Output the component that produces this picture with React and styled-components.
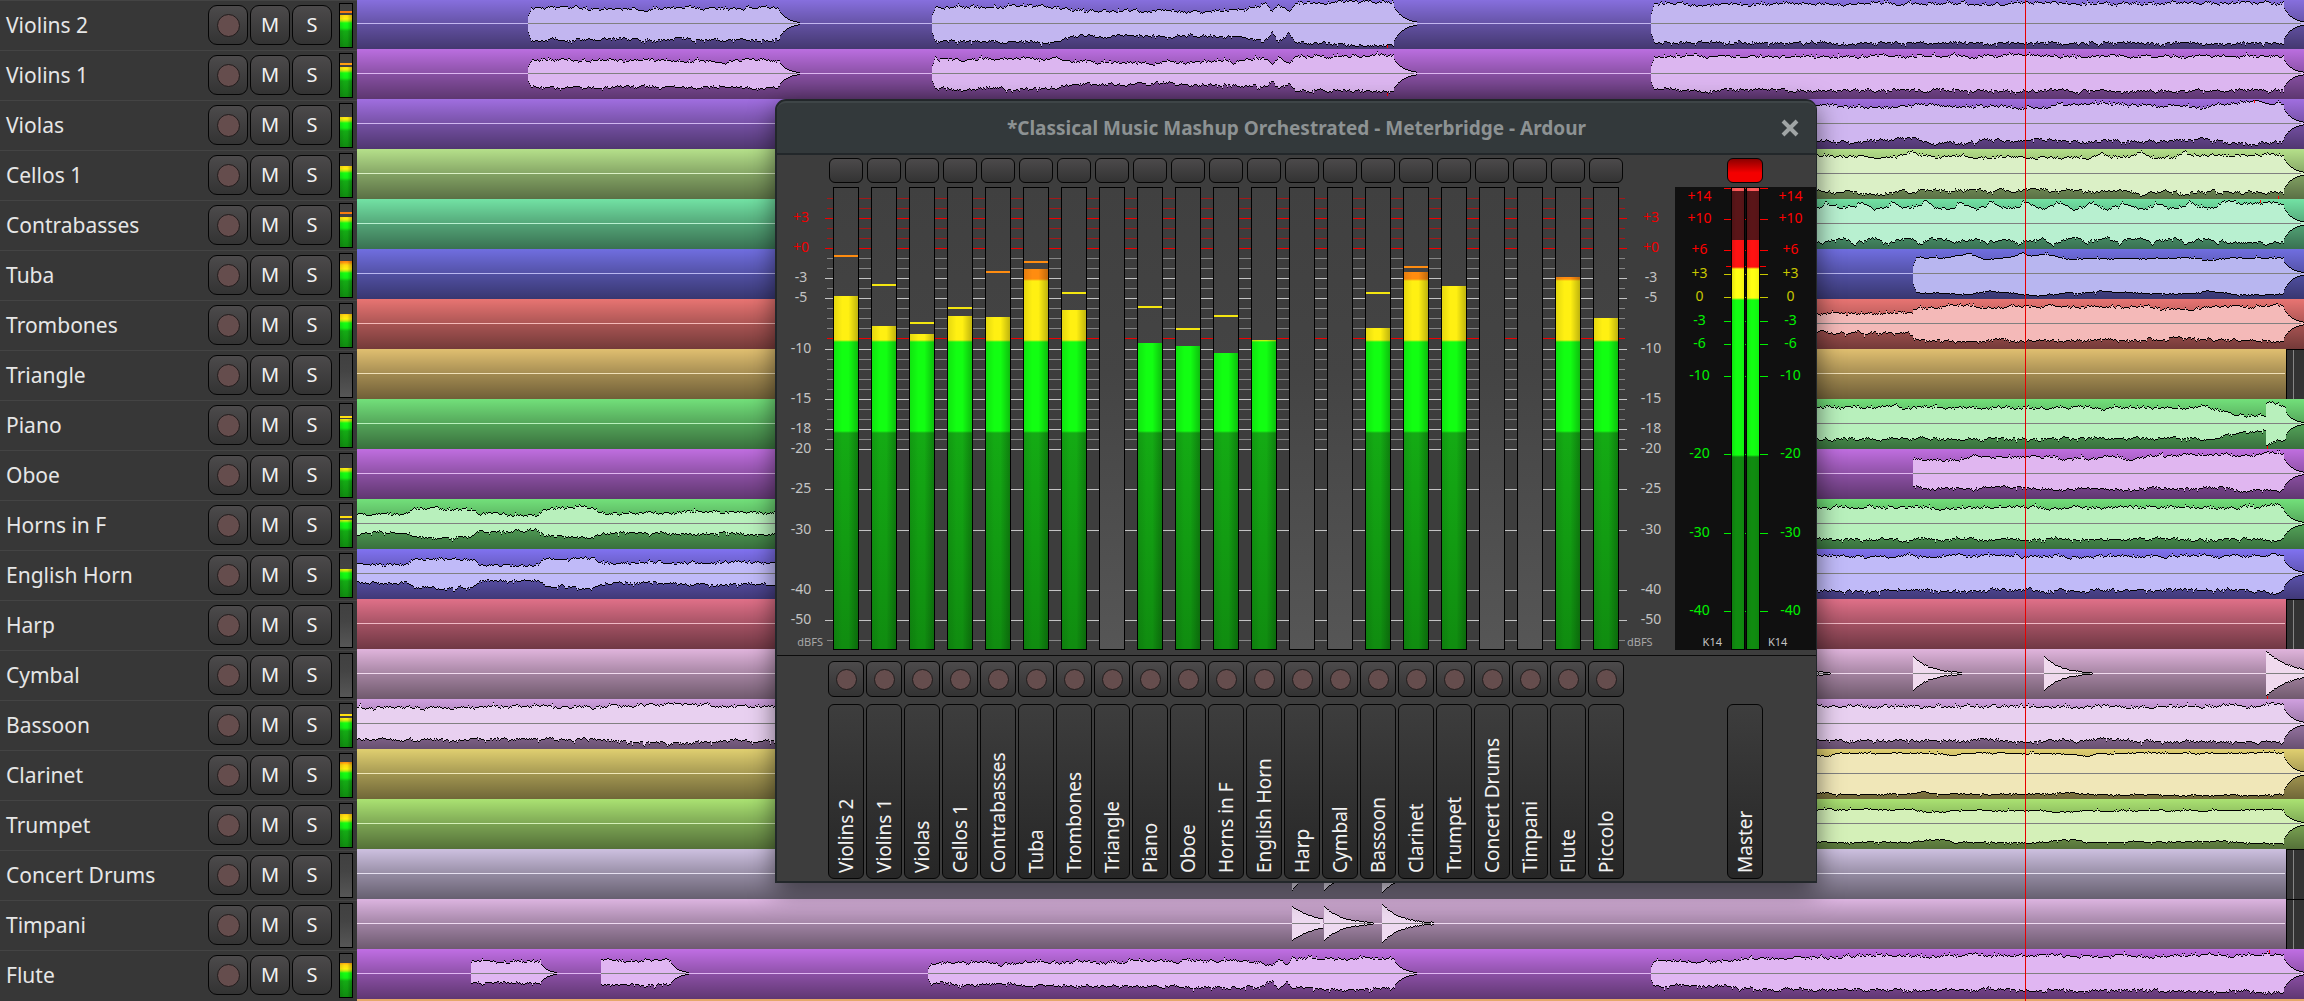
import React from "react";
import styled, { createGlobalStyle, css } from "styled-components";

const GlobalStyle = createGlobalStyle`
  *, *::before, *::after { box-sizing: border-box; }
  html, body { margin: 0; background: #373737; }
  body { font-family: "Noto Sans", "Open Sans", sans-serif; color: #e6e6e6; overflow: hidden; }
  button { font: inherit; color: inherit; padding: 0; margin: 0; }
`;

/* ---------- session data ---------- */

const HEADER_WIDTH = 357;
const LANE_HEIGHT = 50;
const CENTER = 24;

const body = (points, tail = 18, sharp = false) => ({ type: "body", points, tail, sharp });
const hit = (x, amp, length, decay = 3) => ({ type: "hit", x, amp, length, decay });

const stringsPhrases = (k) => [
  body([[528, 15 * k, 17 * k], [560, 16 * k, 17 * k], [620, 15 * k, 16 * k], [740, 15 * k, 16 * k], [750, 17 * k, 18 * k], [780, 15 * k, 16 * k]], 20),
  body([
    [932, 17 * k, 18 * k], [1050, 17 * k, 18 * k], [1070, 13 * k, 13 * k], [1160, 12 * k, 12 * k], [1240, 13 * k, 14 * k],
    [1266, 18 * k, 17 * k], [1272, 11 * k, 10 * k], [1278, 18 * k, 18 * k], [1289, 11 * k, 11 * k], [1295, 20 * k, 19 * k], [1394, 21 * k, 22 * k],
  ], 23),
  body([[1651, 19 * k, 19 * k], [1900, 20 * k, 20 * k], [2284, 20 * k, 20 * k]], 20),
];

const hornPhrases = (up) => [
  body([[357, 10, 10], [407, 9, 9], [413, 14, 13], [440, 15, 15], [470, 14, 14], [480, 9, 8], [538, 8, 7], [544, 14, 13], [592, 15, 15], [604, 10, 10], [775, 11, 11], [790, 12, 12]], 0, true),
  body([[1790, up, up], [2260, up, up], [2273, up + 3, up + 3], [2284, up, up]], 20),
];

const tracks = [
  { name: "Violins 2", color: "#8870e0", wave: "#c2b6f0", regions: stringsPhrases(1), mini: [15, 11], level: [296, 255], clips: [[1387, 46]] },
  { name: "Violins 1", color: "#bb6ee0", wave: "#dcb6f0", regions: stringsPhrases(0.86), mini: [17, 13], level: [326, 284], clips: [[1387, 44]] },
  {
    name: "Violas", color: "#a06ee0", wave: "#cfb6f0", mini: [17], level: [334, 322], clips: [[2254, 1]],
    regions: [body([[1790, 18, 19], [1870, 16, 18], [1910, 17, 15], [1930, 18, 20], [2040, 16, 16], [2070, 20, 19], [2200, 16, 16], [2225, 20, 20], [2254, 22, 20], [2284, 18, 18]], 20)],
  },
  {
    name: "Cellos 1", color: "#b5e08a", wave: "#dbf0c6", mini: [16], level: [316, 307], clips: [[2278, 47]],
    regions: [body([[1790, 18, 18], [1850, 17, 18], [1865, 17, 22], [1905, 17, 18], [1910, 22, 22], [1918, 17, 17], [2090, 16, 17], [2100, 20, 17], [2110, 16, 17], [2130, 17, 18], [2140, 22, 22], [2150, 17, 18], [2175, 16, 17], [2184, 22, 22], [2192, 17, 18], [2284, 19, 20]], 20)],
  },
  {
    name: "Contrabasses", color: "#72e2a4", wave: "#b8f0d0", mini: [17, 12], level: [317, 271], clips: [[2260, 1]],
    regions: [body([
      [1790, 16, 16], ...Array.from({ length: 13 }, (_, i) => [[1810 + i * 33, 15, 15], [1822 + i * 33, 17, 21], [1825 + i * 33, 21, 18]]).flat(),
      [2250, 21, 20], [2284, 20, 20],
    ], 20)],
  },
  {
    name: "Tuba", color: "#706ee0", wave: "#b8b6f0", mini: [11], level: [269, 261], calm: true,
    regions: [body([[1913, 15, 20], [1950, 16, 20], [1968, 20, 22], [1985, 14, 19], [2010, 16, 20], [2023, 20, 22], [2028, 16, 22], [2045, 20, 22], [2065, 15, 20], [2110, 15, 18], [2150, 15, 20], [2200, 15, 20], [2202, 14, 17], [2235, 15, 21], [2284, 15, 21]], 20)],
  },
  {
    name: "Trombones", color: "#e87472", wave: "#f4b9b8", mini: [14], level: [310, 292],
    regions: [
      body([[1790, 10, 10], [1896, 10, 10], [1900, 12, 9], [1913, 12, 10]], 0),
      body([[1913, 15, 16], [1965, 19, 18], [1990, 16, 16], [2040, 18, 18], [2110, 15, 16], [2150, 16, 16], [2190, 14, 15], [2215, 17, 17], [2265, 17, 17], [2275, 19, 18], [2284, 18, 18]], 20, true),
    ],
  },
  { name: "Triangle", color: "#e0bf70", wave: "#f0e0b8", regions: [], ends: true },
  {
    name: "Piano", color: "#72e07a", wave: "#b8f0bc", mini: [19, 16], level: [343, 306], clips: [[2267, 47]],
    regions: [
      body([[1790, 16, 16], [2198, 16, 15], [2202, 18, 17], [2215, 14, 14], [2233, 9, 9], [2266, 6, 6]], 0),
      body([[2266, 20, 21], [2276, 20, 18], [2286, 14, 14]], 18, true),
    ],
  },
  { name: "Oboe", color: "#c06ee0", wave: "#e0b6f0", mini: [18], level: [346, 328], regions: [body([[1913, 15, 14], [1935, 15, 17], [1960, 13, 15], [1975, 17, 16], [1990, 15, 15], [2030, 17, 15], [2060, 15, 17], [2095, 14, 15], [2108, 17, 16], [2130, 14, 16], [2150, 18, 15], [2284, 19, 17]], 20, true)] },
  { name: "Horns in F", color: "#72e07a", wave: "#b8f0bc", mini: [20, 16], level: [353, 315], regions: hornPhrases(16) },
  { name: "English Horn", color: "#8072f0", wave: "#c0baf8", mini: [19], level: [340], regions: hornPhrases(17) },
  { name: "Harp", color: "#e07088", wave: "#f0b8c4", regions: [], ends: true },
  {
    name: "Cymbal", color: "#e0b4dc", wave: "#f0daee", clips: [[2267, 47]],
    regions: [hit(1782, 17, 49), hit(1913, 17, 49), hit(2044, 17, 49), hit(2266, 22, 60, 2.6)],
  },
  { name: "Bassoon", color: "#d0a0e0", wave: "#e8d0f0", mini: [18, 14], level: [328, 292], regions: [body([[357, 16, 16], [600, 16, 16], [680, 19, 20], [730, 17, 17], [1790, 17, 17], [2000, 17, 17], [2240, 17, 18], [2284, 19, 20]], 20, true)] },
  { name: "Clarinet", color: "#e0cf70", wave: "#f0e7b8", mini: [12], level: [272, 266], calm: true, regions: [body([[1790, 20, 21], [1816, 18, 20], [1828, 17, 19], [1836, 20, 21], [1910, 20, 21], [1922, 20, 18], [1940, 20, 21], [1955, 17, 20], [1965, 20, 21], [2060, 20, 20], [2088, 17, 20], [2096, 20, 21], [2230, 20, 22], [2284, 21, 21]], 20)] },
  { name: "Trumpet", color: "#aae272", wave: "#d4f0b8", mini: [14], level: [286], calm: true, regions: [body([[1790, 14, 19], [1910, 14, 19], [1926, 12, 16], [1945, 11, 16], [1952, 13, 19], [2040, 13, 19], [2060, 11, 16], [2080, 12, 16], [2084, 13, 19], [2200, 13, 18], [2284, 14, 20]], 20)] },
  { name: "Concert Drums", color: "#cdc0e0", wave: "#e6e0f0", ends: true, regions: [hit(1292, 17, 30), hit(1324, 17, 45), hit(1382, 19, 52)] },
  { name: "Timpani", color: "#dcb4e0", wave: "#eedaf0", ends: true, regions: [hit(1292, 17, 31, 1.4), hit(1324, 17, 50), hit(1382, 19, 52)] },
  {
    name: "Flute", color: "#c06ee4", wave: "#e0b6f2", mini: [13], level: [277], clips: [[2269, 1]],
    regions: [
      body([[471, 11, 10], [541, 12, 11]], 16, true),
      body([[601, 13, 12], [671, 13, 12]], 18, true),
      body([[928, 10, 10], [1010, 11, 11], [1150, 12, 13], [1260, 13, 14], [1272, 8, 8], [1278, 14, 16], [1287, 8, 9], [1292, 15, 15], [1395, 14, 15]], 22),
      body([[1651, 13, 13], [1700, 12, 12], [1760, 15, 16], [1900, 18, 17], [1950, 18, 16], [2140, 17, 17], [2284, 19, 19]], 20),
    ],
  },
];

const strips = [...tracks, { name: "Piccolo", level: [318] }];

/* ---------- waveform drawing ---------- */

const makeRandom = (seed) => {
  let s = seed * 7919 + 13;
  return () => {
    s = (s * 1664525 + 1013904223) % 4294967296;
    return s / 4294967296;
  };
};

const ampAt = (points, x, side) => {
  for (let i = 1; i < points.length; i += 1) {
    const a = points[i - 1];
    const b = points[i];
    if (x <= b[0]) return a[side] + ((b[side] - a[side]) * (x - a[0])) / (b[0] - a[0]);
  }
  return points[points.length - 1][side];
};

/* Slow drift plus a held jitter step and the odd spike. */
const makeJitter = (random, calm) => {
  const drift = calm ? 0.8 : 1.5;
  const step = calm ? 0.8 : 2.2;
  let slow = 0;
  let held = 0;
  return () => {
    slow = slow * 0.85 + (random() - 0.5) * drift;
    if (random() > 0.45) held = (random() - 0.5) * step;
    const spike = random() > (calm ? 0.97 : 0.94) ? 1.8 : 0;
    return slow + held + spike;
  };
};

const columnsOf = (region, random, calm) => {
  const cols = [];
  if (region.type === "hit") {
    for (let i = 0; i < region.length; i += 1) {
      const a = region.amp * Math.exp((-region.decay * i) / region.length) + (random() - 0.5);
      cols.push([region.x + i, Math.max(0, a), Math.max(0, a)]);
    }
    return cols;
  }
  const start = region.points[0][0];
  const end = region.points[region.points.length - 1][0];
  const jitterUp = makeJitter(random, calm);
  const jitterDown = makeJitter(random, calm);
  for (let x = start; x < end; x += 1) {
    const attack = !region.sharp && x - start < 3 ? 0.55 + (x - start) * 0.15 : 1;
    cols.push([
      x,
      Math.min(23, (ampAt(region.points, x, 1) + jitterUp()) * attack),
      Math.min(23, (ampAt(region.points, x, 2) + jitterDown()) * attack),
    ]);
  }
  const lastUp = ampAt(region.points, end, 1);
  const lastDown = ampAt(region.points, end, 2);
  for (let i = 0; i < region.tail; i += 1) {
    const k = 0.76 * Math.exp((-2.4 * i) / region.tail);
    cols.push([end + i, lastUp * k, lastDown * k]);
  }
  return cols;
};

const pathsOf = (track, seed) => {
  const random = makeRandom(seed + 3);
  let fill = "";
  let edge = "";
  let axis = "";
  track.regions.forEach((region) => {
    const cols = columnsOf(region, random, track.calm);
    cols.forEach(([absX, up, down]) => {
      const x = absX - HEADER_WIDTH;
      const top = CENTER - Math.round(up);
      const bottom = CENTER + Math.round(down);
      fill += `M${x} ${top}h1V${bottom + 1}h-1z`;
      edge += `M${x} ${top}h1v1h-1zM${x} ${bottom}h1v1h-1z`;
    });
    const length = region.tail === 0 ? cols.length : cols.length - 3;
    axis += `M${cols[0][0] - HEADER_WIDTH} ${CENTER}h${length}v1h-${length}z`;
  });
  return { fill, edge, axis };
};

const drawings = tracks.map(pathsOf);

/* ---------- meter scales ---------- */

const FIELD_TOP = 187;
const GREY = "#c4c4c4";
const DIM = "#868686";
const RED = "#f00000";
const DIM_RED = "#a01a1a";

const majorTicks = [
  [218, RED, "+3"], [248, RED, "+0"], [278, GREY, "-3"], [298, GREY, "-5"], [349, GREY, "-10"], [399, GREY, "-15"], [429, GREY, "-18"],
  [449, GREY, "-20"], [489, GREY, "-25"], [530, GREY, "-30"], [590, GREY, "-40"], [620, GREY, "-50"],
];
const minorTicks = [
  ...[198, 208, 228, 238].map((y) => [y, DIM_RED]),
  ...[258, 268, 288, 308, 318, 328, 359, 369, 379, 389, 409, 419, 439, 640].map((y) => [y, DIM]),
  [338, RED],
];

const K_RED = "#ff0000";
const K_YELLOW = "#c8c800";
const K_GREEN = "#00f000";
const masterTicks = [
  [188, K_RED, "+14", 196], [219, K_RED, "+10"], [250, K_RED, "+6"], [274, K_YELLOW, "+3"], [297, K_YELLOW, "0"], [321, K_GREEN, "-3"],
  [344, K_GREEN, "-6"], [376, K_GREEN, "-10"], [454, K_GREEN, "-20"], [533, K_GREEN, "-30"], [611, K_GREEN, "-40"],
];

const tickLayer = (inset) => ([y, color]) =>
  `linear-gradient(${color}, ${color}) ${inset}px ${y - FIELD_TOP}px / calc(100% - ${inset * 2}px) 1px no-repeat`;

const channelTicks = [...majorTicks.map(tickLayer(0)), ...minorTicks.map(tickLayer(2))].join(", ");
const masterTickLayers = [...masterTicks.map(tickLayer(0)), tickLayer(2)([266, K_RED])].join(", ");

/* ---------- styled parts ---------- */

const Desktop = styled.main`
  position: relative;
  display: flex;
  height: 100vh;
  overflow: hidden;
`;

const Headers = styled.section`
  flex: none;
  width: ${HEADER_WIDTH}px;
  background: #373737;
`;

const Header = styled.div`
  display: flex;
  align-items: center;
  gap: 2px;
  height: ${LANE_HEIGHT}px;
  padding: 0 4px 1px 6px;
  border-top: 1px solid #444;
`;

const TrackName = styled.span`
  flex: 1;
  font-size: 21px;
  line-height: 28px;
  white-space: nowrap;
`;

const raised = css`
  border: 1px solid #050505;
  background: linear-gradient(#4c4a4b, #333);
`;

const TrackButton = styled.button`
  ${raised}
  display: flex;
  align-items: center;
  justify-content: center;
  width: 40px;
  height: 40px;
  border-radius: 9px;
  font-size: 20px;
  line-height: 24px;
  color: #f2f2f2;
`;

const RecordDot = styled.span`
  width: ${(p) => p.$size}px;
  height: ${(p) => p.$size}px;
  border: 1px solid #211c1c;
  border-radius: 50%;
  background: #654d4d;
`;

const Meter = styled.div`
  display: flex;
  flex-direction: column;
  justify-content: flex-end;
  flex: none;
  width: ${(p) => p.$width}px;
  height: ${(p) => p.$height}px;
  border: 1px solid #000;
  background: linear-gradient(#404040, #444 40%, #565656);
`;

const MiniMeterSlot = styled.div`
  align-self: flex-start;
  padding: 2px 0 0 5px;
`;

const scaleStops = {
  mini: "#f26a10, #ff8c10 8px, #ffd810 11px, #fff010 15px, #b0f010 17px, #12ff12 19px, #12f012 24px, #14ab14 27px, #108c10",
  channel: "#ff8c10 91px, #fff012 93px, #fff012 152px, #12ff12 154px, #12ff12 243px, #14ab14 245px, #108c10",
  master: "#ff5a5a 3px, #5a1518 3px, #5a1518 52px, #ff1212 52px, #ff1212 79px, #ffff12 81px, #ffff12 110px, #12ff12 112px, #12ff12 267px, #108c10 269px, #108c10",
};

const Level = styled.div`
  flex: none;
  height: ${(p) => p.$height}px;
  background:
    linear-gradient(90deg, rgba(0, 0, 0, 0.1), transparent 35%, transparent 60%, rgba(0, 0, 0, ${(p) => (p.$scale === "master" ? 0.05 : 0.25)})),
    linear-gradient(${(p) => scaleStops[p.$scale]}) left bottom / 100% ${(p) => p.$range}px no-repeat;
`;

const PeakHold = styled.div`
  flex: none;
  height: 2px;
  margin-bottom: ${(p) => p.$gap}px;
  background: ${(p) => p.$color};
`;

const Canvas = styled.section`
  position: relative;
  flex: 1;
  min-width: 0;
  overflow: hidden;
`;

const Lanes = styled.div`
  margin-top: -1px;
`;

const Lane = styled.div`
  display: flex;
  height: ${LANE_HEIGHT}px;
`;

const Region = styled.div`
  flex: ${(p) => (p.$ends ? "0 1 1929px" : "1")};
  min-width: 0;
  overflow: hidden;
  background:
    linear-gradient(${(p) => p.$line}, ${(p) => p.$line}) 0 ${CENTER}px / calc(100% - ${(p) => (p.$ends ? 1 : 0)}px) 1px no-repeat,
    linear-gradient(rgba(0, 0, 0, 0), rgba(0, 0, 0, 0.25) 48%, rgba(0, 0, 0, 0.28) 50%, rgba(0, 0, 0, 0.5)),
    ${(p) => p.$color};
`;

const Waveform = styled.svg`
  display: block;
  width: 100%;
  height: ${LANE_HEIGHT}px;
  shape-rendering: crispEdges;
`;

const EmptyLane = styled.div`
  flex: 1;
  border: solid #000;
  border-width: 1px 0 0 1px;
  background: linear-gradient(#858585, #858585) 6px 0 / 1px 100% no-repeat, #333;
`;

const NextLane = styled.div`
  height: ${LANE_HEIGHT}px;
  background: #e5a86a;
`;

const Playhead = styled.div`
  position: absolute;
  top: 0;
  bottom: 0;
  left: 1668px;
  width: 1px;
  background: #e80000;
`;

const Window = styled.section`
  position: absolute;
  top: 99px;
  left: 775px;
  border: 2px solid #22272a;
  border-right-width: 1px;
  border-radius: 11px 11px 0 0;
  background: #3d3d3d;
  box-shadow: 0 8px 26px rgba(0, 0, 0, 0.55);
`;

const TitleBar = styled.header`
  display: grid;
  grid-template-columns: 50px 1fr 50px;
  align-items: center;
  height: 54px;
  border-top: 2px solid #3e4547;
  border-bottom: 2px solid #22272a;
  border-radius: 9px 9px 0 0;
  background: #33393b;
`;

const Title = styled.h1`
  grid-column: 2;
  margin: 0;
  font-size: 19px;
  line-height: 24px;
  font-weight: 700;
  text-align: center;
  color: #8d9293;
`;

const CloseButton = styled.button`
  display: flex;
  align-items: center;
  justify-content: center;
  width: 32px;
  height: 32px;
  margin-left: 8px;
  border: 0;
  background: none;
  color: #a0a5a5;
`;

const Bridge = styled.div`
  display: grid;
  grid-template-columns: 48px 802px 48px 141px;
`;

const MeterSection = styled(Bridge)`
  grid-template-rows: 25px 463px;
  row-gap: 4px;
  padding: 3px 0 5px;
`;

const ButtonSection = styled(Bridge)`
  grid-template-rows: 36px 175px;
  row-gap: 7px;
  padding: 5px 0 2px;
  border-top: 1px solid #0c0c0c;
`;

const StripRow = styled.div`
  grid-column: 2;
  display: grid;
  grid-template-columns: repeat(21, 38px);
  justify-content: center;
  justify-items: center;
`;

const MasterCell = styled.div`
  grid-column: 4;
  grid-row: ${(p) => p.$row};
  display: flex;
  justify-content: center;
  padding-right: 1px;
`;

const PeakButton = styled.button`
  ${raised}
  width: ${(p) => (p.$clipped ? 36 : 34)}px;
  height: 25px;
  border-radius: 6px;
  ${(p) => p.$clipped && "background: linear-gradient(#8c0000, #f40000 60%, #f40000);"}
`;

const MeterField = styled(StripRow)`
  grid-row: 2;
  background: ${channelTicks};
`;

const Scale = styled.div`
  grid-row: ${(p) => p.$row};
  grid-column: ${(p) => p.$column};
  display: grid;
  grid-template-rows: repeat(463, 1px);
`;

const ScaleLabel = styled.span`
  grid-column: 1;
  grid-row: ${(p) => p.$center - FIELD_TOP - 7} / span 16;
  font-size: 14px;
  line-height: 16px;
  text-align: center;
  color: ${(p) => p.$color};
`;

const ScaleUnit = styled(ScaleLabel)`
  padding-right: 2px;
  font-size: 11px;
  text-align: ${(p) => p.$align};
`;

const MasterField = styled.div`
  grid-row: 2;
  grid-column: 4;
  display: grid;
  grid-template-columns: 49px 44px 45px;
  background: #101010;
`;

const MasterMeters = styled.div`
  grid-column: 2;
  grid-row: 1;
  display: flex;
  gap: 1px;
  padding-left: 7px;
  background: ${masterTickLayers};
`;

const StripRecord = styled.button`
  ${raised}
  display: flex;
  align-items: center;
  justify-content: center;
  width: 36px;
  height: 36px;
  border-radius: 6px;
`;

const StripName = styled.button`
  display: flex;
  align-items: center;
  justify-content: flex-start;
  width: 36px;
  height: 175px;
  padding: 0 0 5px;
  border: 1px solid #050505;
  border-radius: 6px;
  background: linear-gradient(#3d3d3d, #262626);
  color: #f2f2f2;
  writing-mode: vertical-rl;
`;

const Turned = styled.span`
  display: block;
  width: 100%;
  height: 100%;
  font-size: 19px;
  line-height: 34px;
  text-align: left;
  white-space: nowrap;
  transform: rotate(180deg);
`;

/* ---------- components ---------- */

function TrackHeader({ track }) {
  const [fill, peak] = track.mini || [];
  return (
    <Header>
      <TrackName>{track.name}</TrackName>
      <TrackButton aria-label={`Record ${track.name}`}><RecordDot $size={23} /></TrackButton>
      <TrackButton aria-label={`Mute ${track.name}`}>M</TrackButton>
      <TrackButton aria-label={`Solo ${track.name}`}>S</TrackButton>
      <MiniMeterSlot>
        <Meter $width={14} $height={45}>
          {peak && <PeakHold $gap={fill - peak - 2} $color={peak < 13 ? "#f77c10" : peak < 14 ? "#ffa010" : "#ffe010"} />}
          {fill && <Level $scale="mini" $range={43} $height={47 - fill} />}
        </Meter>
      </MiniMeterSlot>
    </Header>
  );
}

function TrackLane({ track, drawing }) {
  return (
    <Lane>
      <Region $color={track.color} $line={track.wave} $ends={track.ends}>
        {track.regions.length > 0 && (
          <Waveform aria-hidden="true">
            <path d={drawing.fill} fill={track.wave} />
            <path d={drawing.edge} fill="#000" />
            <path d={drawing.axis} fill="#808080" />
            {(track.clips || []).map(([x, y]) => (
              <rect key={x} x={x - HEADER_WIDTH} y={y} width="1" height="3" fill="#f00" />
            ))}
          </Waveform>
        )}
      </Region>
      {track.ends && <EmptyLane />}
    </Lane>
  );
}

function ChannelMeter({ level }) {
  const [fill, peak] = level || [];
  return (
    <Meter $width={26} $height={463}>
      {peak && <PeakHold $gap={fill - peak - 2} $color={peak < 280 ? "#ff8c10" : "#f4e610"} />}
      {fill && <Level $scale="channel" $range={461} $height={649 - fill} />}
    </Meter>
  );
}

function ChannelScale({ column, unitAlign }) {
  return (
    <Scale $row={2} $column={column}>
      {majorTicks.map(([y, color, label]) => (
        <ScaleLabel key={label} $center={y - 1} $color={color}>{label}</ScaleLabel>
      ))}
      <ScaleUnit $center={642} $color="#a8a8a8" $align={unitAlign}>dBFS</ScaleUnit>
    </Scale>
  );
}

function MasterScale({ column, unitAlign }) {
  return (
    <Scale $row={1} $column={column}>
      {masterTicks.map(([y, color, label, center]) => (
        <ScaleLabel key={label} $center={center || y - 1} $color={color}>{label}</ScaleLabel>
      ))}
      <ScaleUnit $center={642} $color="#c4c4c4" $align={unitAlign}>K14</ScaleUnit>
    </Scale>
  );
}

function Meterbridge() {
  return (
    <Window aria-labelledby="meterbridge-title">
      <TitleBar>
        <Title id="meterbridge-title">*Classical Music Mashup Orchestrated - Meterbridge - Ardour</Title>
        <CloseButton aria-label="Close">
          <svg width="18" height="18" viewBox="0 0 18 18" aria-hidden="true">
            <path d="M2 2L16 16M16 2L2 16" stroke="currentColor" strokeWidth="4" />
          </svg>
        </CloseButton>
      </TitleBar>
      <MeterSection>
        <StripRow>
          {strips.map((s) => <PeakButton key={s.name} aria-label={`Reset peak ${s.name}`} />)}
        </StripRow>
        <MasterCell $row={1}><PeakButton $clipped aria-label="Reset peak Master" /></MasterCell>
        <ChannelScale column={1} unitAlign="right" />
        <MeterField>
          {strips.map((s) => <ChannelMeter key={s.name} level={s.level} />)}
        </MeterField>
        <ChannelScale column={3} unitAlign="left" />
        <MasterField>
          <MasterScale column={1} unitAlign="right" />
          <MasterMeters>
            {["left", "right"].map((side) => (
              <Meter key={side} $width={14} $height={463}>
                <Level $scale="master" $range={461} $height={461} />
              </Meter>
            ))}
          </MasterMeters>
          <MasterScale column={3} unitAlign="left" />
        </MasterField>
      </MeterSection>
      <ButtonSection>
        <StripRow>
          {strips.map((s) => (
            <StripRecord key={s.name} aria-label={`Record ${s.name}`}><RecordDot $size={21} /></StripRecord>
          ))}
        </StripRow>
        <StripRow>
          {strips.map((s) => <StripName key={s.name}><Turned>{s.name}</Turned></StripName>)}
        </StripRow>
        <MasterCell $row={2}><StripName><Turned>Master</Turned></StripName></MasterCell>
      </ButtonSection>
    </Window>
  );
}

export default function App() {
  return (
    <>
      <GlobalStyle />
      <Desktop>
        <Headers aria-label="Tracks">
          {tracks.map((t) => <TrackHeader key={t.name} track={t} />)}
        </Headers>
        <Canvas aria-label="Timeline">
          <Lanes>
            {tracks.map((t, i) => <TrackLane key={t.name} track={t} drawing={drawings[i]} />)}
            <NextLane />
          </Lanes>
          <Playhead />
        </Canvas>
        <Meterbridge />
      </Desktop>
    </>
  );
}
